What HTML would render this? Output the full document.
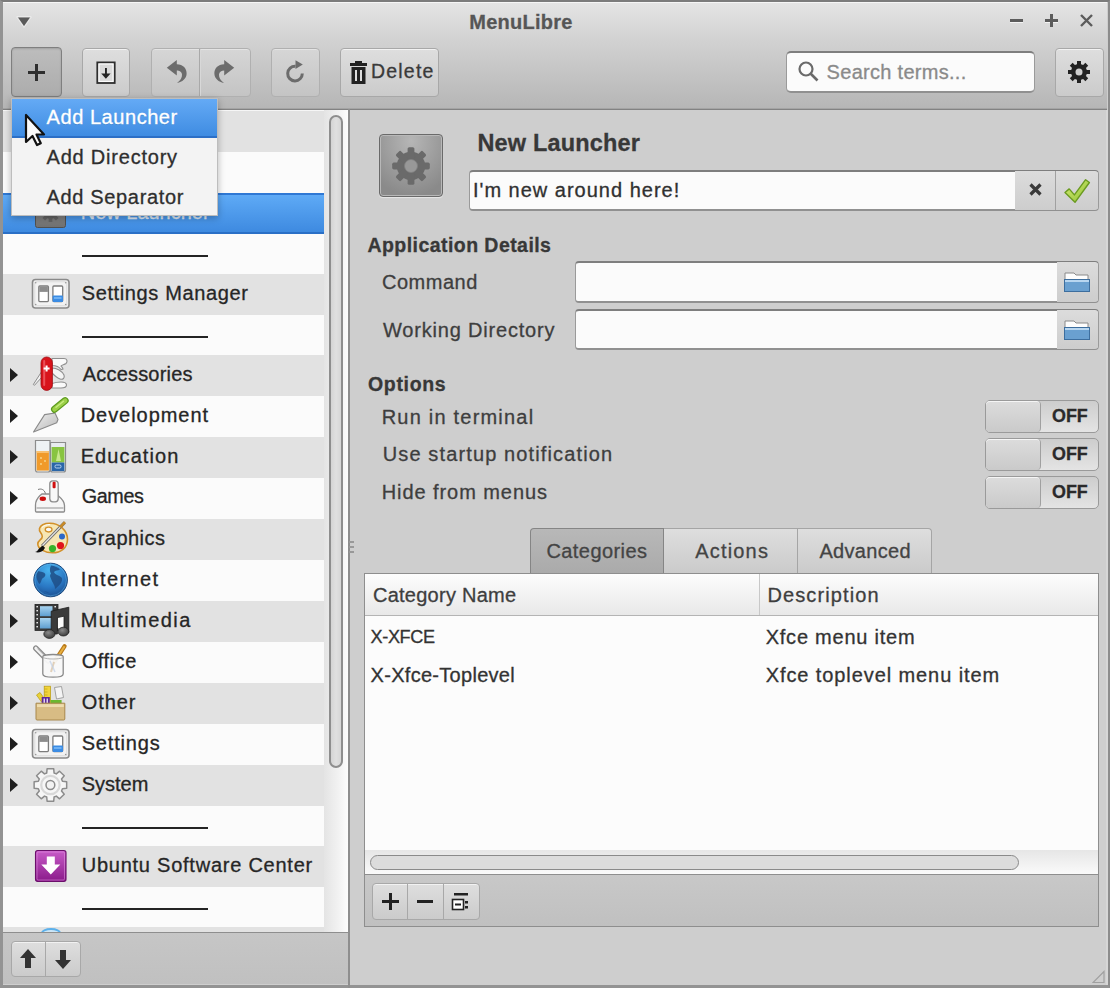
<!DOCTYPE html>
<html><head><meta charset="utf-8">
<style>
*{box-sizing:border-box;margin:0;padding:0}
html,body{width:1110px;height:988px;overflow:hidden;background:#cecece;font-family:"Liberation Sans",sans-serif;color:#3a3a3a}
.a{position:absolute}
.t{position:absolute;white-space:pre;line-height:1;-webkit-text-stroke:0.3px currentColor}
.btn{position:absolute;border:1px solid #a8a8a8;border-radius:4px;background:linear-gradient(#dedede,#cbcbcb);box-shadow:inset 0 1px 0 rgba(255,255,255,.6)}
.dis{background:linear-gradient(#d6d6d6,#c4c4c4);border-color:#b0b0b0;box-shadow:inset 0 1px 0 rgba(255,255,255,.35)}
.entry{position:absolute;border:1px solid #9a9a9a;border-top:2px solid #7e7e7e;border-bottom:2px solid #909090;border-radius:4px;background:#fbfbfb}
.row{position:absolute;left:3px;width:321px}
.g{background:#e2e2e2}
.w{background:#fbfbfb}
.lbl{font-size:20px;color:#454545}
.sel{background:linear-gradient(#5eaaf6,#3e8ae0);border-top:2px solid #2f78d4;border-bottom:2px solid #2a6fc6}
.tree-t{font-size:20.5px}
.sw{position:absolute;left:985px;width:114px;height:33px;border:1px solid #9a9a9a;border-radius:5px;background:linear-gradient(#cdcdcd,#e4e4e4)}
.knob{position:absolute;left:0;top:0;width:55px;height:31px;border-right:1px solid #a0a0a0;border-radius:4px;background:linear-gradient(#dcdcdc,#cacaca);box-shadow:inset 0 1px 0 rgba(255,255,255,.7)}
</style></head><body>
<!-- window frame -->
<div class="a" style="left:0;top:0;width:1110px;height:988px;border:3px solid #939393;border-right:2px solid #8c8c8c;border-top:2px solid #7c7c7c"></div>
<div class="a" style="left:1106px;top:110px;width:2px;height:875px;background:#d6d6d6"></div>
<!-- header -->
<div class="a" style="left:3px;top:2px;width:1104px;height:106px;background:linear-gradient(#e4e4e4,#d2d2d2 35%,#b6b6b6);border-top:1px solid #f6f6f6"></div>
<div class="a" style="left:3px;top:108px;width:1104px;height:1px;background:#a4a4a4"></div>
<div class="a" style="left:3px;top:109px;width:1104px;height:1px;background:#828282"></div>
<!-- menu triangle -->
<svg class="a" style="left:15px;top:15px" width="18" height="14"><path d="M2 2h14l-7 10z" fill="#5a5a5a" stroke="#fff" stroke-opacity=".75" stroke-width="1.2" stroke-linejoin="round"/></svg>
<!-- window controls -->
<div class="a" style="left:1010px;top:19px;width:13px;height:3px;background:#5c5c5c;box-shadow:0 1px 0 rgba(255,255,255,.7)"></div>
<div class="a" style="left:1045px;top:19px;width:13px;height:2.6px;background:#5c5c5c;box-shadow:0 1px 0 rgba(255,255,255,.7)"></div>
<div class="a" style="left:1050.2px;top:14px;width:2.6px;height:13px;background:#5c5c5c"></div>
<svg class="a" style="left:1079px;top:13px" width="15" height="15"><path d="M2 2L13 13M13 2L2 13" stroke="#5c5c5c" stroke-width="2.4"/></svg>
<!-- toolbar buttons -->
<div class="btn" style="left:11px;top:47px;width:51px;height:50px;background:linear-gradient(#bdbdbd,#acacac);border-color:#7f7f7f;box-shadow:inset 0 1px 2px rgba(0,0,0,.15)"></div>
<div class="a" style="left:28px;top:71px;width:17px;height:3px;background:#2e2e2e"></div>
<div class="a" style="left:35px;top:64px;width:3px;height:17px;background:#2e2e2e"></div>

<div class="btn" style="left:82px;top:48px;width:48px;height:49px"></div>
<svg class="a" style="left:94px;top:60px" width="24" height="26" viewBox="0 0 24 26"><rect x="3.3" y="2.4" width="17.4" height="20.6" fill="#dadada" stroke="#2e2e2e" stroke-width="1.8"/><rect x="5" y="4" width="14" height="17.4" fill="none" stroke="#fff" stroke-width="1"/><rect x="11" y="8" width="1.9" height="6" fill="#222"/><path d="M7.2 13.5h9.4l-4.7 5.3z" fill="#222"/></svg>

<div class="btn dis" style="left:151px;top:48px;width:100px;height:49px"></div>
<div class="a" style="left:199px;top:49px;width:2px;height:47px;background:#a9a9a9;border-right:1px solid #d8d8d8"></div>
<svg class="a" style="left:162px;top:58px" width="28" height="28" viewBox="0 0 28 28"><path d="M4.8 9.8L14.8 2V6.3C21 6.5 25 10.5 24.6 16C24.3 20.5 20.5 24 15 25C18.5 22.5 20.2 19.5 20 16.5C19.8 13.8 17.2 12.5 14.8 12.5V17.5Z" fill="#6c6c6c"/></svg>
<svg class="a" style="left:211px;top:58px" width="28" height="28" viewBox="0 0 28 28"><path d="M23.2 9.8L13.2 2V6.3C7 6.5 3 10.5 3.4 16C3.7 20.5 7.5 24 13 25C9.5 22.5 7.8 19.5 8 16.5C8.2 13.8 10.8 12.5 13.2 12.5V17.5Z" fill="#6c6c6c"/></svg>

<div class="btn dis" style="left:271px;top:48px;width:49px;height:49px"></div>
<svg class="a" style="left:282px;top:58px" width="28" height="28" viewBox="0 0 28 28"><path d="M20.3 15.5A7.3 7.3 0 1 1 13.5 8.3" fill="none" stroke="#6c6c6c" stroke-width="3"/><path d="M13.5 2.2L20.8 6.6L13.5 11z" fill="#6c6c6c"/></svg>

<div class="btn" style="left:340px;top:48px;width:99px;height:49px"></div>
<svg class="a" style="left:349px;top:61px" width="20" height="24"><rect x="1" y="2" width="17" height="3" fill="#222"/><rect x="6" y="0" width="7" height="3" fill="#222"/><rect x="2.5" y="6" width="14" height="17" fill="#222"/><rect x="6" y="9" width="2" height="11" fill="#ddd"/><rect x="11" y="9" width="2" height="11" fill="#ddd"/></svg>

<!-- search -->
<div class="entry" style="left:786px;top:51px;width:249px;height:42px;border-radius:5px"></div>
<svg class="a" style="left:797px;top:60px" width="24" height="24"><circle cx="9" cy="9" r="6.5" fill="none" stroke="#6a6a6a" stroke-width="2.2"/><path d="M13.5 13.5l7 7" stroke="#6a6a6a" stroke-width="2.6"/></svg>

<div class="btn" style="left:1055px;top:48px;width:49px;height:49px"></div>
<svg class="a" style="left:1066px;top:59px" width="26" height="26" viewBox="0 0 26 26"><g fill="#222"><circle cx="13" cy="13" r="8"/><g id="tooth"><rect x="11" y="2" width="4" height="22"/></g><rect x="11" y="2" width="4" height="22" transform="rotate(45 13 13)"/><rect x="11" y="2" width="4" height="22" transform="rotate(90 13 13)"/><rect x="11" y="2" width="4" height="22" transform="rotate(135 13 13)"/></g><circle cx="13" cy="13" r="3.5" fill="#cfcfcf"/></svg>

<!-- LEFT PANE -->
<div class="a" style="left:3px;top:110px;width:345px;height:823px;background:#f6f6f6"></div>
<div class="row g" style="top:111px;height:41px"></div>
<div class="row w" style="top:152px;height:41px"></div>
<div class="row sel" style="top:193px;height:41px"></div>
<div class="a" style="left:30px;top:193px;width:42px;height:41px;overflow:hidden"><svg width="42" height="41" viewBox="0 0 42 41"><defs><linearGradient id="gb" x1="0" y1="0" x2="0" y2="1"><stop offset="0" stop-color="#9a9a9a"/><stop offset="1" stop-color="#707070"/></linearGradient></defs><rect x="5.5" y="4.5" width="30" height="30" rx="2" fill="url(#gb)" stroke="#505050"/><g fill="#626262"><circle cx="20.5" cy="19.5" r="6.5"/><rect x="18.7" y="10" width="3.6" height="19"/><rect x="18.7" y="10" width="3.6" height="19" transform="rotate(45 20.5 19.5)"/><rect x="18.7" y="10" width="3.6" height="19" transform="rotate(90 20.5 19.5)"/><rect x="18.7" y="10" width="3.6" height="19" transform="rotate(135 20.5 19.5)"/></g><circle cx="20.5" cy="19.5" r="2.8" fill="#8a8a8a"/></svg></div>
<div class="row w" style="top:234px;height:40px"></div>
<div class="a" style="left:82px;top:255px;width:126px;height:2px;background:#242424"></div>
<div class="row g" style="top:274px;height:41px"></div>
<div class="a" style="left:30px;top:274px;width:42px;height:41px;overflow:hidden"><svg width="42" height="41" viewBox="0 0 42 41"><rect x="2.5" y="5.5" width="36.5" height="28.5" rx="3" fill="#f2f2f2" stroke="#8a8a8a" stroke-width="1.6"/><rect x="4.8" y="7.8" width="32" height="24" rx="1" fill="none" stroke="#dcdcdc" stroke-width="1"/><g fill="#999"><circle cx="5.7" cy="8.8" r=".8"/><circle cx="35.7" cy="8.8" r=".8"/><circle cx="5.7" cy="30.5" r=".8"/><circle cx="35.7" cy="30.5" r=".8"/></g><rect x="8.8" y="12" width="9.6" height="15.6" rx="1" fill="#fff" stroke="#7c7c7c" stroke-width="1.3"/><rect x="9.3" y="12.5" width="8.6" height="5.4" fill="#8c8c8c"/><rect x="22.9" y="12" width="9.8" height="15.6" rx="1" fill="#fff" stroke="#7c7c7c" stroke-width="1.3"/><rect x="22.6" y="21.5" width="10.4" height="6.4" rx="1" fill="#3b8ce4"/><rect x="24" y="23" width="7.5" height="2" fill="#6cb0f4"/></svg></div>
<div class="row w" style="top:315px;height:40px"></div>
<div class="a" style="left:82px;top:336px;width:126px;height:2px;background:#242424"></div>
<div class="row g" style="top:355px;height:41px"></div>
<div class="a" style="left:30px;top:355px;width:42px;height:41px;overflow:hidden"><svg width="42" height="41" viewBox="0 0 42 41"><path d="M22 3.5h12c3 0 4 3 2 5-2 1.5-4 1-5 2.5 1 1 2 2 2 3l-2 .5c-2-3-5-4-9-4z" fill="#fafafa" stroke="#8e8e8e" stroke-width="1.1"/><path d="M22 13c5 0 10 3 12 7 1 3-1 5-4 4-3-1-6-4-8-6z" fill="#f4f4f4" stroke="#8e8e8e" stroke-width="1.1"/><path d="M22 28.5c3-1 6-1.5 9-1.5 4 0 5.5 1.5 5.5 3s-2 3-5.5 3h-9z" fill="#fafafa" stroke="#8e8e8e" stroke-width="1.1"/><path d="M12 16L3.3 29.5l1.2.8L12 22z" fill="#f0f0f0" stroke="#8e8e8e" stroke-width="1"/><rect x="11" y="2" width="11.4" height="33.4" rx="5.7" fill="#d8141c" stroke="#a00a10" stroke-width=".8"/><rect x="13.2" y="5" width="2" height="26" rx="1" fill="#f06068" opacity=".8"/><path d="M16.6 10.5v6M13.6 13.5h6" stroke="#fff" stroke-width="2"/></svg></div>
<svg class="a" style="left:9px;top:367px" width="10" height="16"><path d="M1 1l8 7-8 7z" fill="#1e1e1e"/></svg>
<div class="row w" style="top:396px;height:41px"></div>
<div class="a" style="left:30px;top:396px;width:42px;height:41px;overflow:hidden"><svg width="42" height="41" viewBox="0 0 42 41"><defs><linearGradient id="dv" x1="0" y1="0" x2="1" y2="1"><stop offset="0" stop-color="#f0f0f0"/><stop offset="1" stop-color="#b8b8b8"/></linearGradient></defs><path d="M3.5 36L14.6 18.6 25 17 28 23.5 26.7 26.7z" fill="url(#dv)" stroke="#8a8a8a" stroke-width="1.1" stroke-linejoin="round"/><path d="M23.5 17.5l.5-3 1.5-1" fill="none" stroke="#8a8a8a" stroke-width="1.4"/><path d="M24.5 13.2L35.2 4.6" stroke="#5c9a1e" stroke-width="7" stroke-linecap="round"/><path d="M24.5 13.2L35.2 4.6" stroke="#9cd048" stroke-width="4.6" stroke-linecap="round"/><path d="M26 11.2L33.5 5.2" stroke="#c8ec80" stroke-width="1.4" stroke-linecap="round"/></svg></div>
<svg class="a" style="left:9px;top:408px" width="10" height="16"><path d="M1 1l8 7-8 7z" fill="#1e1e1e"/></svg>
<div class="row g" style="top:437px;height:41px"></div>
<div class="a" style="left:30px;top:437px;width:42px;height:41px;overflow:hidden"><svg width="42" height="41" viewBox="0 0 42 41"><path d="M5.5 3.5h14.5v29.5c0 1.2-1 2-2 2H7.5c-1 0-2-.8-2-2z" fill="#eef2f4" stroke="#8c8c8c" stroke-width="1.2"/><rect x="6.6" y="14" width="12.3" height="19.6" fill="#f09a2a"/><rect x="6.6" y="14" width="12.3" height="2" fill="#f8c070"/><g fill="#f8d890"><circle cx="11" cy="21" r=".9"/><circle cx="15" cy="24" r=".9"/><circle cx="11" cy="27" r=".9"/></g><path d="M20.5 5.5h15v27.5c0 1.2-1 2-2 2h-11c-1 0-2-.8-2-2z" fill="#e8ecee" stroke="#8c8c8c" stroke-width="1.2"/><rect x="21.6" y="10" width="12.8" height="15.5" fill="#88c440"/><path d="M26 24l2.5-12 2.5 12z" fill="#d8f0a0" opacity=".8"/><rect x="21.6" y="25.5" width="12.8" height="8.6" fill="#2a66a8"/><rect x="25" y="28" width="6" height="3" rx="1.2" fill="none" stroke="#b8d4f0" stroke-width="1"/></svg></div>
<svg class="a" style="left:9px;top:449px" width="10" height="16"><path d="M1 1l8 7-8 7z" fill="#1e1e1e"/></svg>
<div class="row w" style="top:478px;height:41px"></div>
<div class="a" style="left:30px;top:478px;width:42px;height:41px;overflow:hidden"><svg width="42" height="41" viewBox="0 0 42 41"><path d="M5.5 33V27c0-3 2-7 4.5-9.5L12 16h14l2.5 2c3 2.5 6 6 6 9.5V33c0 .6-.4 1-1 1H6.5c-.6 0-1-.4-1-1z" fill="#f6f6f6" stroke="#8c8c8c" stroke-width="1.3"/><rect x="6.5" y="29" width="27" height="2" fill="#c4c4c4"/><ellipse cx="12.8" cy="20.8" rx="3.2" ry="2.2" fill="#cc0e0e"/><path d="M8 11.5c3-1 6-.5 7.5 4" fill="none" stroke="#777" stroke-width="1"/><rect x="19.8" y="2.8" width="8.4" height="21" rx="3" fill="#f8f8f8" stroke="#8c8c8c" stroke-width="1.3"/><rect x="22.6" y="3.8" width="3" height="6.5" rx="1" fill="#d01010"/></svg></div>
<svg class="a" style="left:9px;top:490px" width="10" height="16"><path d="M1 1l8 7-8 7z" fill="#1e1e1e"/></svg>
<div class="row g" style="top:519px;height:41px"></div>
<div class="a" style="left:30px;top:519px;width:42px;height:41px;overflow:hidden"><svg width="42" height="41" viewBox="0 0 42 41"><path d="M20 4.2c9 0 17.5 7 17.5 16 0 9-7 13.6-15 13.6S7.8 29.5 7.8 25c0-4 4.5-4 4.5-7.5S8.5 13 9.5 9.5C10.5 6 14.5 4.2 20 4.2z" fill="#f6e6b4" stroke="#d2902a" stroke-width="1.6"/><ellipse cx="18.6" cy="10.6" rx="3.4" ry="2.4" fill="#f8f8f8" stroke="#d2902a" stroke-width="1.3"/><path d="M12 8.5c2-2 5-3 8-3" fill="none" stroke="#fff" stroke-width="1"/><circle cx="32" cy="17.6" r="3" fill="#2e68c8"/><circle cx="30.5" cy="26.6" r="3.6" fill="#e0141c"/><circle cx="22.5" cy="29.6" r="3.6" fill="#38b42a"/><path d="M34.8 3.4L12 27" stroke="#6c6c6c" stroke-width="3"/><path d="M34.8 3.4L12 27" stroke="#e8e8e8" stroke-width="1.2"/><path d="M35 3.2L30 8.4" stroke="#c88a28" stroke-width="2.6"/><path d="M12.5 26.5l-3.6 3.2c-1.2 1.2-1.5 2.8-3.8 3.4 3 1 6.5.2 8.5-2l1.4-2.4z" fill="#101010"/></svg></div>
<svg class="a" style="left:9px;top:531px" width="10" height="16"><path d="M1 1l8 7-8 7z" fill="#1e1e1e"/></svg>
<div class="row w" style="top:560px;height:41px"></div>
<div class="a" style="left:30px;top:560px;width:42px;height:41px;overflow:hidden"><svg width="42" height="41" viewBox="0 0 42 41"><defs><radialGradient id="ig" cx=".45" cy=".2" r=".85"><stop offset="0" stop-color="#48b4f0"/><stop offset=".6" stop-color="#2a78c4"/><stop offset="1" stop-color="#1a4a8a"/></radialGradient></defs><circle cx="20.6" cy="20" r="16.8" fill="url(#ig)" stroke="#1c4a80" stroke-width="1"/><path d="M8.5 11c2 1 3 .5 5 1.5 3 1.5 2 4-.5 5.5-2 1.3-1.4 4.5-3.5 6-1.8-2-3.5-6-3-9.5.5-1.5 1-2.5 2-3.5zM21 5.5c4 .5 7 2 9 4-2 1.5-4.5.5-6 2.5 1 3 5 3 7.5 5.5 1.5 2 0 5.5-2.5 8-1 1-2.5 2.5-4 3.5 0-4-2.5-6-3.5-9-.7-2.5-2.5-4-.5-6.5-1.5-2-1.5-5 0-8zM14 31c1.5 1 3.5 1.8 5 2-1.5-1-3-1.5-5-2z" fill="#1e4e86" opacity=".85"/><circle cx="20.6" cy="20" r="15.8" fill="none" stroke="#6cc0f0" stroke-width=".8" opacity=".5"/></svg></div>
<svg class="a" style="left:9px;top:572px" width="10" height="16"><path d="M1 1l8 7-8 7z" fill="#1e1e1e"/></svg>
<div class="row g" style="top:601px;height:41px"></div>
<div class="a" style="left:30px;top:601px;width:42px;height:41px;overflow:hidden"><svg width="42" height="41" viewBox="0 0 42 41"><defs><linearGradient id="mf" x1="0" y1="0" x2="0" y2="1"><stop offset="0" stop-color="#a8d4f0"/><stop offset="1" stop-color="#5e9ed0"/></linearGradient><radialGradient id="mh" cx=".4" cy=".35" r=".7"><stop offset="0" stop-color="#8a8a8a"/><stop offset="1" stop-color="#383838"/></radialGradient></defs><rect x="5" y="3.4" width="23" height="26" fill="#3a3a3a" stroke="#222" stroke-width=".8"/><rect x="10" y="5.2" width="12.5" height="10" fill="url(#mf)"/><rect x="10" y="17" width="12.5" height="10.5" fill="url(#mf)"/><g fill="#e8e8e8"><rect x="6.4" y="5" width="1.6" height="1.4"/><rect x="6.4" y="9" width="1.6" height="1.4"/><rect x="6.4" y="13" width="1.6" height="1.4"/><rect x="6.4" y="17" width="1.6" height="1.4"/><rect x="6.4" y="21" width="1.6" height="1.4"/><rect x="6.4" y="25" width="1.6" height="1.4"/><rect x="24.4" y="5" width="1.6" height="1.4"/></g><rect x="27.5" y="14.5" width="7.5" height="12.5" fill="#fafafa"/><path d="M21.2 10.2L38.8 6.2V31.5H34V15.2L27.4 16.6V33H21.2z" fill="#3a3a3a" stroke="#1e1e1e" stroke-width=".8" stroke-linejoin="round"/><ellipse cx="19.4" cy="33" rx="5.6" ry="4.4" fill="url(#mh)" stroke="#222" stroke-width=".8"/><ellipse cx="33.4" cy="30.6" rx="5.4" ry="4.4" fill="url(#mh)" stroke="#222" stroke-width=".8"/></svg></div>
<svg class="a" style="left:9px;top:613px" width="10" height="16"><path d="M1 1l8 7-8 7z" fill="#1e1e1e"/></svg>
<div class="row w" style="top:642px;height:41px"></div>
<div class="a" style="left:30px;top:642px;width:42px;height:41px;overflow:hidden"><svg width="42" height="41" viewBox="0 0 42 41"><path d="M5.8 6.2l12.4 12.6" stroke="#8a8a8a" stroke-width="5.5" stroke-linecap="round"/><path d="M5.8 6.2l12.4 12.6" stroke="#f2f2f2" stroke-width="3" stroke-linecap="round"/><path d="M7.3 6.5l10 10" stroke="#9a9a9a" stroke-width=".8"/><path d="M34.6 4.2L24.6 19.6" stroke="#b87818" stroke-width="4.2" stroke-linecap="round"/><path d="M34.6 4.2L24.6 19.6" stroke="#e8b040" stroke-width="2"/><path d="M12.8 14.5c0-1 4.5-2 10.2-2s10.2 1 10.2 2V32c0 2-4.5 3.2-10.2 3.2S12.8 34 12.8 32z" fill="#f8f8f8" fill-opacity=".95" stroke="#8a8a8a" stroke-width="1.3"/><path d="M13 15.5c2 1 6 1.5 10 1.5s8-.5 10-1.5" fill="none" stroke="#b4b4b4" stroke-width="1"/><path d="M24 20l-3 10" stroke="#d8c0a0" stroke-width="2" opacity=".7"/><path d="M20 19l5 11" stroke="#c0d0e8" stroke-width="1.5" opacity=".7"/></svg></div>
<svg class="a" style="left:9px;top:654px" width="10" height="16"><path d="M1 1l8 7-8 7z" fill="#1e1e1e"/></svg>
<div class="row g" style="top:683px;height:41px"></div>
<div class="a" style="left:30px;top:683px;width:42px;height:41px;overflow:hidden"><svg width="42" height="41" viewBox="0 0 42 41"><path d="M6.5 12l3.5-2.5 5 7-3.5 2.5z" fill="#e8d23a" stroke="#b89a10" stroke-width=".7"/><rect x="14.2" y="3.2" width="6.4" height="17" fill="#f2d43a" stroke="#b89a10" stroke-width=".7"/><g stroke="#b89a10" stroke-width=".6"><path d="M14.5 6h3M14.5 9h3M14.5 12h3M14.5 15h3"/></g><path d="M24.5 4.5l7-1 2 11-7 1.5z" fill="#f4f4f4" stroke="#9a9a9a" stroke-width=".9"/><rect x="11.7" y="14" width="8.1" height="7" fill="#5e2a9a"/><rect x="13.5" y="15.5" width="1.5" height="4.5" fill="#e0d0f0"/><rect x="16.5" y="15.5" width="1.5" height="4.5" fill="#e0d0f0"/><rect x="20.6" y="17" width="11" height="4" fill="#6ab830"/><path d="M6 20.2h28.8V36c0 .6-.4 1-1 1H7c-.6 0-1-.4-1-1z" fill="#d8bc84" stroke="#a8884c" stroke-width="1"/><rect x="7" y="21.2" width="26.8" height="2.8" fill="#eedcae"/></svg></div>
<svg class="a" style="left:9px;top:695px" width="10" height="16"><path d="M1 1l8 7-8 7z" fill="#1e1e1e"/></svg>
<div class="row w" style="top:724px;height:41px"></div>
<div class="a" style="left:30px;top:724px;width:42px;height:41px;overflow:hidden"><svg width="42" height="41" viewBox="0 0 42 41"><rect x="2.5" y="5.5" width="36.5" height="28.5" rx="3" fill="#f2f2f2" stroke="#8a8a8a" stroke-width="1.6"/><rect x="4.8" y="7.8" width="32" height="24" rx="1" fill="none" stroke="#dcdcdc" stroke-width="1"/><g fill="#999"><circle cx="5.7" cy="8.8" r=".8"/><circle cx="35.7" cy="8.8" r=".8"/><circle cx="5.7" cy="30.5" r=".8"/><circle cx="35.7" cy="30.5" r=".8"/></g><rect x="8.8" y="12" width="9.6" height="15.6" rx="1" fill="#fff" stroke="#7c7c7c" stroke-width="1.3"/><rect x="9.3" y="12.5" width="8.6" height="5.4" fill="#8c8c8c"/><rect x="22.9" y="12" width="9.8" height="15.6" rx="1" fill="#fff" stroke="#7c7c7c" stroke-width="1.3"/><rect x="22.6" y="21.5" width="10.4" height="6.4" rx="1" fill="#3b8ce4"/><rect x="24" y="23" width="7.5" height="2" fill="#6cb0f4"/></svg></div>
<svg class="a" style="left:9px;top:736px" width="10" height="16"><path d="M1 1l8 7-8 7z" fill="#1e1e1e"/></svg>
<div class="row g" style="top:765px;height:41px"></div>
<div class="a" style="left:30px;top:765px;width:42px;height:41px;overflow:hidden"><svg width="42" height="41" viewBox="0 0 42 41"><path d="M16.72 7.95 L17.09 3.73 L23.71 3.73 L24.08 7.95 L26.32 8.87 L29.56 6.16 L34.24 10.84 L31.53 14.08 L32.45 16.32 L36.67 16.69 L36.67 23.31 L32.45 23.68 L31.53 25.92 L34.24 29.16 L29.56 33.84 L26.32 31.13 L24.08 32.05 L23.71 36.27 L17.09 36.27 L16.72 32.05 L14.48 31.13 L11.24 33.84 L6.56 29.16 L9.27 25.92 L8.35 23.68 L4.13 23.31 L4.13 16.69 L8.35 16.32 L9.27 14.08 L6.56 10.84 L11.24 6.16 L14.48 8.87Z" fill="#f6f6f6" stroke="#8c8c8c" stroke-width="1.5" stroke-linejoin="round"/><circle cx="20.4" cy="20" r="9.2" fill="none" stroke="#d8d8d8" stroke-width="2.2"/><circle cx="20.4" cy="20" r="4.4" fill="#f2f2f2" stroke="#8c8c8c" stroke-width="1.5"/></svg></div>
<svg class="a" style="left:9px;top:777px" width="10" height="16"><path d="M1 1l8 7-8 7z" fill="#1e1e1e"/></svg>
<div class="row w" style="top:806px;height:40px"></div>
<div class="a" style="left:82px;top:827px;width:126px;height:2px;background:#242424"></div>
<div class="row g" style="top:846px;height:41px"></div>
<div class="a" style="left:30px;top:846px;width:42px;height:41px;overflow:hidden"><svg width="42" height="41" viewBox="0 0 42 41"><defs><linearGradient id="ug" x1="0" y1="0" x2="0" y2="1"><stop offset="0" stop-color="#c85cc8"/><stop offset="1" stop-color="#8a1a8a"/></linearGradient></defs><rect x="5.5" y="4.5" width="30.5" height="31" rx="2.2" fill="url(#ug)" stroke="#6a0e6a" stroke-width="1.1"/><rect x="7" y="6" width="27.5" height="28" rx="1.2" fill="none" stroke="#e8a0e8" stroke-width=".8" opacity=".6"/><path d="M16.8 10.5h8v8h5.5L20.8 28.5 11.3 18.5h5.5z" fill="#fff"/></svg></div>
<div class="row w" style="top:887px;height:40px"></div>
<div class="a" style="left:82px;top:908px;width:126px;height:2px;background:#242424"></div>
<div class="row g" style="top:927px;height:5px"></div>
<div class="a" style="left:41px;top:928px;width:20px;height:4px;overflow:hidden"><div style="width:20px;height:10px;border-radius:50%;border:2px solid #5cb0ea;background:#cde6f6"></div></div>
<div class="t" style="left:80.7px;top:202.1px;font-size:20px;font-weight:400;color:#dce6f2;letter-spacing:0.00px;">New Launcher</div>
<div class="t" style="left:81.7px;top:283.1px;font-size:20px;font-weight:400;color:#262626;letter-spacing:0.63px;">Settings Manager</div>
<div class="t" style="left:82.7px;top:364.1px;font-size:20px;font-weight:400;color:#262626;letter-spacing:0.20px;">Accessories</div>
<div class="t" style="left:80.7px;top:405.1px;font-size:20px;font-weight:400;color:#262626;letter-spacing:0.95px;">Development</div>
<div class="t" style="left:80.7px;top:446.1px;font-size:20px;font-weight:400;color:#262626;letter-spacing:1.09px;">Education</div>
<div class="t" style="left:81.7px;top:487.3px;font-size:19.78px;font-weight:400;color:#262626;letter-spacing:-0.38px;">Games</div>
<div class="t" style="left:81.7px;top:528.1px;font-size:20px;font-weight:400;color:#262626;letter-spacing:0.47px;">Graphics</div>
<div class="t" style="left:80.7px;top:569.1px;font-size:20px;font-weight:400;color:#262626;letter-spacing:1.36px;">Internet</div>
<div class="t" style="left:80.7px;top:610.1px;font-size:20px;font-weight:400;color:#262626;letter-spacing:1.44px;">Multimedia</div>
<div class="t" style="left:81.7px;top:651.1px;font-size:20px;font-weight:400;color:#262626;letter-spacing:0.54px;">Office</div>
<div class="t" style="left:81.7px;top:692.1px;font-size:20px;font-weight:400;color:#262626;letter-spacing:0.93px;">Other</div>
<div class="t" style="left:81.7px;top:733.1px;font-size:20px;font-weight:400;color:#262626;letter-spacing:0.83px;">Settings</div>
<div class="t" style="left:81.7px;top:774.1px;font-size:20px;font-weight:400;color:#262626;letter-spacing:0.00px;">System</div>
<div class="t" style="left:81.7px;top:855.1px;font-size:20px;font-weight:400;color:#262626;letter-spacing:0.76px;">Ubuntu Software Center</div>
<!-- scroll trough & bar -->
<div class="a" style="left:324px;top:110px;width:24px;height:822px;background:linear-gradient(90deg,#e4e4e4,#f2f2f2 60%,#fdfdfd)"></div>
<div class="a" style="left:328.5px;top:115px;width:14.5px;height:653px;border:2px solid #8e8e8e;border-radius:7.5px;background:linear-gradient(90deg,#d4d4d4,#e0e0e0 50%,#d6d6d6)"></div>
<div class="a" style="left:348px;top:109px;width:2px;height:879px;background:#8e8e8e"></div>
<!-- left bottom toolbar -->
<div class="a" style="left:3px;top:932px;width:345px;height:1px;background:#8e8e8e"></div>
<div class="a" style="left:3px;top:933px;width:345px;height:51px;background:linear-gradient(#c6c6c6,#c0c0c0)"></div>
<div class="btn" style="left:11px;top:941px;width:70px;height:36px"></div>
<div class="a" style="left:45px;top:942px;width:1px;height:34px;background:#a8a8a8"></div>
<svg class="a" style="left:18px;top:948px" width="20" height="22"><path d="M10 1L2 10h5v10h6V10h5z" fill="#333"/></svg>
<svg class="a" style="left:53px;top:948px" width="20" height="22"><path d="M10 21L2 12h5V2h6v10h5z" fill="#333"/></svg>

<!-- pane grip -->
<div class="a" style="left:349px;top:541px;width:5px;height:2px;background:#999"></div>
<div class="a" style="left:349px;top:546px;width:5px;height:2px;background:#999"></div>
<div class="a" style="left:349px;top:551px;width:5px;height:2px;background:#999"></div>

<!-- RIGHT PANE -->

<!-- app icon -->
<div class="a" style="left:379px;top:134px;width:64px;height:63px;border:1.5px solid #6a6a6a;border-radius:4px;background:radial-gradient(ellipse 75% 90% at 50% 10%,#b6b6b6,#8a8a8a);box-shadow:inset 0 0 0 1px #b8b8b8,0 1px 1px rgba(255,255,255,.5)"></div>
<svg class="a" style="left:391px;top:146px" width="40" height="40" viewBox="0 0 40 40"><g fill="#6a6a6a"><circle cx="20" cy="20" r="14.2"/><rect x="16.6" y="1.2" width="6.8" height="37.6" rx="1.6"/><rect x="16.6" y="1.2" width="6.8" height="37.6" rx="1.6" transform="rotate(45 20 20)"/><rect x="16.6" y="1.2" width="6.8" height="37.6" rx="1.6" transform="rotate(90 20 20)"/><rect x="16.6" y="1.2" width="6.8" height="37.6" rx="1.6" transform="rotate(135 20 20)"/></g><circle cx="20" cy="20" r="6.5" fill="#989898" stroke="#808080" stroke-width=".8"/></svg>
<!-- name entry -->
<div class="entry" style="left:469px;top:170px;width:630px;height:41px"></div>
<div class="a" style="left:1015px;top:171px;width:83px;height:39px;background:linear-gradient(#dcdcdc,#cdcdcd);border-radius:0 3px 3px 0"></div>
<div class="a" style="left:1055px;top:171px;width:1px;height:39px;background:#a0a0a0"></div>
<svg class="a" style="left:1028px;top:182px" width="15" height="15"><path d="M2.5 2.5l10 10M12.5 2.5l-10 10" stroke="#3a3a3a" stroke-width="3.2" stroke-linecap="butt"/></svg>
<svg class="a" style="left:1061px;top:175px" width="30" height="30" viewBox="0 0 30 30"><defs><linearGradient id="ck" x1="0" y1="0" x2="1" y2="1"><stop offset="0" stop-color="#d8ec78"/><stop offset="1" stop-color="#8cc030"/></linearGradient></defs><path d="M4 17.5l4.2-3.6 5.2 6 11.2-15.2 3.8 2.8-14.4 19.8z" fill="url(#ck)" stroke="#6a9a20" stroke-width="1.4" stroke-linejoin="round"/></svg>
<!-- command entry -->
<div class="entry" style="left:575px;top:261px;width:524px;height:42px"></div>
<div class="a" style="left:1057px;top:262px;width:41px;height:40px;background:linear-gradient(#dcdcdc,#cdcdcd);border-radius:0 3px 3px 0"></div>
<div class="entry" style="left:575px;top:309px;width:524px;height:41px"></div>
<div class="a" style="left:1057px;top:310px;width:41px;height:39px;background:linear-gradient(#dcdcdc,#cdcdcd);border-radius:0 3px 3px 0"></div>
<svg class="a" style="left:1063px;top:270px" width="28" height="24" viewBox="0 0 28 24"><path d="M2 3h9l2 2h12v6H2z" fill="#fdfdfd" stroke="#8a8a8a"/><rect x="1.5" y="9.5" width="25" height="12" fill="#6aa0d0" stroke="#3d6e9e"/><rect x="2" y="10" width="24" height="2" fill="#b8d6f0"/></svg>
<svg class="a" style="left:1063px;top:318px" width="28" height="24" viewBox="0 0 28 24"><path d="M2 3h9l2 2h12v6H2z" fill="#fdfdfd" stroke="#8a8a8a"/><rect x="1.5" y="9.5" width="25" height="12" fill="#6aa0d0" stroke="#3d6e9e"/><rect x="2" y="10" width="24" height="2" fill="#b8d6f0"/></svg>
<!-- switches -->
<div class="sw" style="top:400px"><div class="knob"></div></div>
<div class="sw" style="top:438px"><div class="knob"></div></div>
<div class="sw" style="top:476px"><div class="knob"></div></div>
<!-- tabs -->
<div class="a" style="left:530px;top:528px;width:134px;height:46px;border:1px solid #858585;border-bottom:none;border-radius:4px 0 0 0;background:linear-gradient(#b8b8b8,#aaaaaa)"></div>
<div class="a" style="left:664px;top:528px;width:268px;height:46px;border:1px solid #a5a5a5;border-bottom:none;border-left:none;border-radius:0 4px 0 0;background:linear-gradient(#dedede,#cacaca)"></div>
<div class="a" style="left:797px;top:529px;width:1px;height:45px;background:#a5a5a5"></div>
<!-- table frame -->
<div class="a" style="left:364px;top:573px;width:735px;height:354px;border:1px solid #8e8e8e;background:#fcfcfc"></div>
<div class="a" style="left:365px;top:574px;width:733px;height:42px;background:linear-gradient(#fdfdfd,#e8e8e8);border-bottom:1px solid #b4b4b4"></div>
<div class="a" style="left:759px;top:574px;width:1px;height:41px;background:#c8c8c8"></div>
<div class="a" style="left:365px;top:850px;width:733px;height:24px;background:linear-gradient(#e6e6e6,#fafafa)"></div>
<div class="a" style="left:370px;top:855px;width:649px;height:15px;border:1.5px solid #8a8a8a;border-radius:8px;background:#dcdcdc"></div>
<div class="a" style="left:365px;top:874px;width:733px;height:1px;background:#8e8e8e"></div>
<div class="a" style="left:365px;top:875px;width:733px;height:51px;background:linear-gradient(#c8c8c8,#c0c0c0)"></div>
<div class="btn" style="left:372px;top:883px;width:108px;height:37px"></div>
<div class="a" style="left:407px;top:884px;width:1px;height:35px;background:#a8a8a8"></div>
<div class="a" style="left:443px;top:884px;width:1px;height:35px;background:#a8a8a8"></div>
<div class="a" style="left:382px;top:900px;width:17px;height:3px;background:#222"></div>
<div class="a" style="left:389px;top:893px;width:3px;height:17px;background:#222"></div>
<div class="a" style="left:417px;top:900px;width:16px;height:3px;background:#222"></div>
<svg class="a" style="left:451px;top:891px" width="24" height="22"><rect x="3" y="2" width="14" height="2.5" fill="#222"/><rect x="1.5" y="8.5" width="11" height="10" fill="#fff" stroke="#222" stroke-width="1.6"/><rect x="4" y="12.5" width="6" height="2" fill="#222"/><rect x="14" y="10" width="3" height="2.5" fill="#222"/><rect x="14" y="15" width="3" height="2.5" fill="#222"/></svg>
<!-- resize grip -->
<svg class="a" style="left:1092px;top:970px" width="14" height="14"><path d="M12 1.5V12.5H1z" fill="none" stroke="#a0a0a0" stroke-width="1.2"/></svg>
<div class="t" style="left:469.3px;top:11.5px;font-size:20px;font-weight:700;color:#565656;letter-spacing:0.25px;text-shadow:0 1px 0 rgba(255,255,255,.55)">MenuLibre</div>
<div class="t" style="left:371.0px;top:62.0px;font-size:19.5px;font-weight:400;color:#3a3a3a;letter-spacing:1.20px;">Delete</div>
<div class="t" style="left:826.6px;top:61.9px;font-size:20px;font-weight:400;color:#8a8a8a;letter-spacing:0.29px;">Search terms...</div>
<div class="t" style="left:477.4px;top:132.1px;font-size:23.5px;font-weight:700;color:#383838;letter-spacing:0.18px;">New Launcher</div>
<div class="t" style="left:473.0px;top:179.9px;font-size:20px;font-weight:400;color:#303030;letter-spacing:1.00px;">I&#x27;m new around here!</div>
<div class="t" style="left:367.5px;top:236.0px;font-size:19.5px;font-weight:700;color:#383838;letter-spacing:0.44px;">Application Details</div>
<div class="t" style="left:382.0px;top:272.1px;font-size:20px;font-weight:400;color:#3e3e3e;letter-spacing:0.50px;">Command</div>
<div class="t" style="left:383.0px;top:319.6px;font-size:20px;font-weight:400;color:#3e3e3e;letter-spacing:0.81px;">Working Directory</div>
<div class="t" style="left:368.0px;top:374.8px;font-size:19.5px;font-weight:700;color:#383838;letter-spacing:0.67px;">Options</div>
<div class="t" style="left:381.7px;top:406.5px;font-size:20px;font-weight:400;color:#3e3e3e;letter-spacing:1.21px;">Run in terminal</div>
<div class="t" style="left:382.7px;top:444.1px;font-size:20px;font-weight:400;color:#3e3e3e;letter-spacing:1.13px;">Use startup notification</div>
<div class="t" style="left:381.7px;top:481.9px;font-size:20px;font-weight:400;color:#3e3e3e;letter-spacing:0.93px;">Hide from menus</div>
<div class="t" style="left:1052.0px;top:408.4px;font-size:17.92px;font-weight:700;color:#2a2a2a;letter-spacing:0.00px;">OFF</div>
<div class="t" style="left:1052.0px;top:446.4px;font-size:17.92px;font-weight:700;color:#2a2a2a;letter-spacing:0.00px;">OFF</div>
<div class="t" style="left:1052.0px;top:484.4px;font-size:17.92px;font-weight:700;color:#2a2a2a;letter-spacing:0.00px;">OFF</div>
<div class="t" style="left:546.4px;top:541.3px;font-size:20px;font-weight:400;color:#444;letter-spacing:0.44px;">Categories</div>
<div class="t" style="left:695.3px;top:540.9px;font-size:20px;font-weight:400;color:#444;letter-spacing:1.17px;">Actions</div>
<div class="t" style="left:819.4px;top:540.9px;font-size:20px;font-weight:400;color:#444;letter-spacing:0.33px;">Advanced</div>
<div class="t" style="left:373.0px;top:585.1px;font-size:20px;font-weight:400;color:#3e3e3e;letter-spacing:0.25px;">Category Name</div>
<div class="t" style="left:767.5px;top:585.1px;font-size:20px;font-weight:400;color:#3e3e3e;letter-spacing:1.10px;">Description</div>
<div class="t" style="left:370.6px;top:628.1px;font-size:18.12px;font-weight:400;color:#333;letter-spacing:-0.40px;">X-XFCE</div>
<div class="t" style="left:370.6px;top:665.1px;font-size:20px;font-weight:400;color:#333;letter-spacing:0.29px;">X-Xfce-Toplevel</div>
<div class="t" style="left:765.7px;top:626.5px;font-size:20px;font-weight:400;color:#333;letter-spacing:0.77px;">Xfce menu item</div>
<div class="t" style="left:765.7px;top:665.1px;font-size:20px;font-weight:400;color:#333;letter-spacing:0.91px;">Xfce toplevel menu item</div>


<!-- popup menu -->

<div class="a" style="left:11px;top:98px;width:207px;height:118px;background:#f3f3f3;border:1px solid #bdbdbd;box-shadow:0 2px 7px rgba(0,0,0,.28)"></div>
<div class="a" style="left:12px;top:99px;width:205px;height:39px;background:linear-gradient(#64aaf5,#3f8ce2);border-bottom:2px solid #2c6fc6"></div>
<svg class="a" style="left:24px;top:113px" width="26" height="36" viewBox="0 0 26 36"><path d="M2 2V29l6.5-6 4.5 9 3.8-1.8-4.3-8.7H20z" fill="#fafafa" stroke="#111" stroke-width="2.2" stroke-linejoin="round"/></svg>
<div class="t" style="left:46.6px;top:107.3px;font-size:20px;font-weight:400;color:#ffffff;letter-spacing:0.55px;text-shadow:0 1px 0 rgba(0,0,0,.12)">Add Launcher</div>
<div class="t" style="left:46.6px;top:146.7px;font-size:20px;font-weight:400;color:#2e2e2e;letter-spacing:0.78px;">Add Directory</div>
<div class="t" style="left:46.6px;top:186.6px;font-size:20px;font-weight:400;color:#2e2e2e;letter-spacing:0.65px;">Add Separator</div>

</body></html>
